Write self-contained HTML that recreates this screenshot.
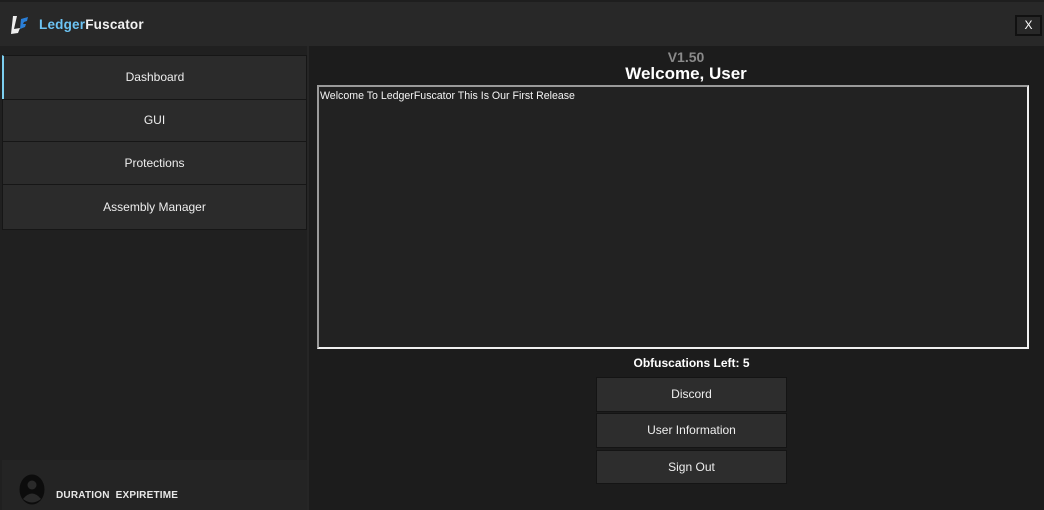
<!DOCTYPE html>
<html><head><style>
*{margin:0;padding:0;box-sizing:border-box}
body{width:1044px;height:510px;background:#1c1c1c;font-family:"Liberation Sans",sans-serif;position:relative;overflow:hidden;color:#fff}
.title{position:absolute;left:0;top:0;width:1044px;height:46px;background:#282828;border-top:2px solid #1e1e1e}
.side{position:absolute;left:0;top:46px;width:309px;height:464px;background:#202020;border-right:2px solid #262626}
.btn{position:absolute;left:2px;width:305px;background:#2b2b2b;border:1px solid #161616;font-size:12px;text-align:center;color:#eee}
.b2{position:absolute;left:596px;width:191px;height:35px;background:#2d2d2d;border:1px solid #141414;font-size:12px;text-align:center;line-height:33px;color:#eee}
</style></head><body>
<div class="title">
<svg style="position:absolute;left:10px;top:13px" width="20" height="20" viewBox="0 0 20 20"><path d="M3 1 L7 1 L4 14 L10 13 L8 18 L1 19 Z" fill="#eee"/><path d="M11 4 L18 2 L17 6 L14 7 L13 9 L16 9 L15 12 L10 14 Z" fill="#2a7fd8"/></svg>
<div style="position:absolute;left:39px;top:15px;font-size:13.5px;font-weight:bold;letter-spacing:0.2px"><span style="color:#6cc4f4">Ledger</span><span style="color:#f2f2f2">Fuscator</span></div>
<div style="position:absolute;left:1015px;top:13px;width:27px;height:21px;border:2px solid #111;font-size:12px;text-align:center;line-height:17px">X</div>
</div>
<div class="side">
<div class="btn" style="top:9px;height:45px;line-height:43px;border-left:2px solid #7ccff0">Dashboard</div>
<div class="btn" style="top:53px;height:43px;line-height:41px">GUI</div>
<div class="btn" style="top:95px;height:44px;line-height:42px">Protections</div>
<div class="btn" style="top:138px;height:46px;line-height:44px">Assembly Manager</div>
<div style="position:absolute;left:2px;top:414px;width:305px;height:50px;background:#242424">
<svg style="position:absolute;left:17px;top:14px" width="26" height="31" viewBox="0 0 26 31"><ellipse cx="13" cy="15.5" rx="12.5" ry="15" fill="#0c0c0c"/><circle cx="13" cy="11" r="4.5" fill="#2a2a2a"/><path d="M4 25 Q13 14 22 25 Q13 32 4 25Z" fill="#2a2a2a"/></svg>
<div style="position:absolute;left:54px;top:30px;font-size:10px;font-weight:bold;color:#e8e8e8;letter-spacing:0.2px">DURATION &nbsp;EXPIRETIME</div>
</div>
</div>
<div style="position:absolute;left:310px;top:49px;width:752px;text-align:center;font-size:14px;font-weight:bold;color:#8a8a8a">V1.50</div>
<div style="position:absolute;left:310px;top:64px;width:752px;text-align:center;font-size:17px;font-weight:bold">Welcome, User</div>
<div style="position:absolute;left:317px;top:85px;width:712px;height:264px;background:#222;border:2px solid #f0f0f0;border-top-color:#9a9a9a;border-left-color:#9a9a9a">
<div style="position:absolute;left:1px;top:3px;font-size:10.6px;color:#f4f4f4">Welcome To LedgerFuscator This Is Our First Release</div></div>
<div style="position:absolute;left:596px;top:356px;width:191px;text-align:center;font-size:12px;font-weight:bold">Obfuscations Left: 5</div>
<div class="b2" style="top:377px">Discord</div>
<div class="b2" style="top:413px">User Information</div>
<div class="b2" style="top:450px;height:34px">Sign Out</div>
</body></html>
